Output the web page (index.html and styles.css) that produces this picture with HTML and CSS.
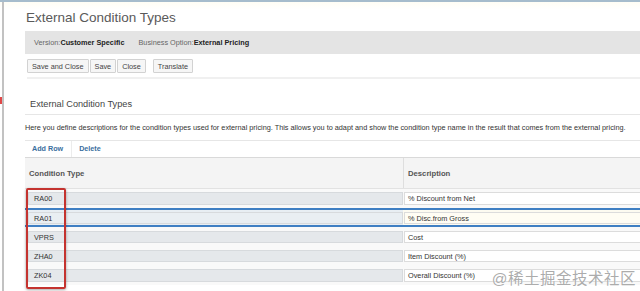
FILE: index.html
```html
<!DOCTYPE html>
<html lang="en">
<head>
  <meta charset="UTF-8">
  <meta name="viewport" content="width=device-width, initial-scale=1.0">
  <title>External Condition Types</title>
  <link rel="stylesheet" href="styles.css">
</head>
<body>
  <div class="shell">
    <div class="edge"><span class="edge-mark"></span></div>

    <main class="page">
      <h1 class="page-title">External Condition Types</h1>

      <div class="info-bar">
        <span class="info-item">Version:<b>Customer Specific</b></span>
        <span class="info-item">Business Option:<b>External Pricing</b></span>
      </div>

      <div class="toolbar">
        <button class="btn">Save and Close</button>
        <button class="btn">Save</button>
        <button class="btn">Close</button>
        <button class="btn btn-apart">Translate</button>
      </div>

      <section class="panel">
        <h2 class="panel-title">External Condition Types</h2>
        <p class="panel-hint">Here you define descriptions for the condition types used for external pricing. This allows you to adapt and show the condition type name in the result that comes from the external pricing.</p>

        <div class="actions">
          <a href="#" class="action">Add Row</a>
          <a href="#" class="action">Delete</a>
        </div>

        <div class="grid">
          <div class="grid-head">
            <div class="head-cell">Condition Type</div>
            <div class="head-cell head-desc">Description</div>
          </div>

          <div class="grid-row">
            <div class="cell cell-code">RA00</div>
            <div class="cell cell-desc">% Discount from Net</div>
          </div>
          <div class="grid-row selected">
            <div class="cell cell-code">RA01</div>
            <div class="cell cell-desc">% Disc.from Gross</div>
          </div>
          <div class="grid-row">
            <div class="cell cell-code">VPRS</div>
            <div class="cell cell-desc">Cost</div>
          </div>
          <div class="grid-row">
            <div class="cell cell-code">ZHA0</div>
            <div class="cell cell-desc">Item Discount (%)</div>
          </div>
          <div class="grid-row">
            <div class="cell cell-code">ZK04</div>
            <div class="cell cell-desc">Overall Discount (%)</div>
          </div>

          <!-- cadre rouge d'annotation -->
          <div class="highlight"></div>
        </div>
      </section>
    </main>
  </div>

  <div class="watermark">@稀土掘金技术社区</div>
</body>
</html>
```

FILE: styles.css
```css
:root {
  --text-color: #333;
  --light-text: #666;
  --line: #e6e6e6;
  --link: #3b6e9e;
  --select: #3f7fc3;
}

body {
  margin: 0;
  padding: 0;
  font-family: 'Liberation Sans', Arial, sans-serif;
  color: var(--text-color);
  background: linear-gradient(#fffdf2, #fff 10px);
  border-top: 2px solid #a6bccc;
  overflow: hidden;
}

.shell {
  display: flex;
  min-height: 289px;
}

.edge {
  position: relative;
  width: 2px;
  margin-left: 2px;
  background-color: #c2c2c2;
  flex-shrink: 0;
}

.edge-mark {
  position: absolute;
  left: -2px;
  top: 95px;
  width: 2px;
  height: 7px;
  background-color: #e04848;
}

.page {
  flex-grow: 1;
  padding-left: 21px;
}

.page-title {
  margin: 7px 0 4px 0;
  padding-left: 1px;
  font-size: 13.5px;
  line-height: 18px;
  font-weight: normal;
  color: #5a5a5a;
}

.info-bar {
  display: flex;
  align-items: center;
  gap: 14px;
  height: 23px;
  padding-left: 9px;
  background-color: #e4e4e4;
  font-size: 7.3px;
}

.info-item {
  color: var(--light-text);
}

.info-item b {
  color: #222;
}

.toolbar {
  display: flex;
  gap: 1px;
  margin: 5px 0 4px 2px;
  padding-bottom: 4px;
  border-bottom: 2px solid #f0f0f0;
}

.btn {
  margin: 0;
  height: 14px;
  padding: 0 4px;
  font-family: inherit;
  font-size: 7.3px;
  color: #444;
  background-color: #f6f6f6;
  border: 1px solid #d2d2d2;
  border-radius: 1px;
}

.btn-apart {
  margin-left: 6px;
}

.panel {
  margin-top: 19px;
}

.panel-title {
  margin: 0;
  padding: 0 0 4px 5px;
  font-size: 9.2px;
  line-height: 12px;
  font-weight: normal;
  color: #444;
  border-bottom: 1px solid var(--line);
}

.panel-hint {
  margin: 0;
  height: 25px;
  line-height: 25px;
  font-size: 7.3px;
  color: #333;
  white-space: nowrap;
  border-bottom: 1px solid var(--line);
}

.actions {
  display: flex;
  height: 16px;
  align-items: center;
  border-bottom: 1.5px solid #d9d9d9;
}

.action {
  padding: 0 8px 0 7px;
  line-height: 16px;
  font-size: 7.2px;
  font-weight: bold;
  color: var(--link);
  text-decoration: none;
}

.action:first-child {
  border-right: 1px solid #ececec;
}

.grid {
  position: relative;
}

.grid-head {
  display: grid;
  grid-template-columns: 378px 1fr;
  height: 30px;
  background-color: #f4f4f4;
  border-bottom: 1px solid #e2e2e2;
}

.head-cell {
  display: flex;
  align-items: center;
  padding-left: 4px;
  font-size: 7.7px;
  font-weight: bold;
  color: #555;
}

.head-desc {
  border-left: 1px solid #dedede;
  padding-left: 4px;
}

.grid-row {
  box-sizing: border-box;
  display: grid;
  grid-template-columns: 378px 1fr;
  align-items: center;
  height: 19.2px;
  background-color: #f9f9f9;
}

.grid-row.selected {
  border-top: 2px solid var(--select);
  border-bottom: 2px solid var(--select);
  background: linear-gradient(90deg, #e8eef3 378px, #fdfbf1 378px);
}

.cell {
  box-sizing: border-box;
  height: 12.5px;
  line-height: 11px;
  padding-left: 5px;
  font-size: 7.3px;
  color: #333;
  white-space: nowrap;
}

.cell-code {
  margin-left: 3px;
  background-color: #e5e8eb;
  border: 1px solid #d7dadd;
}

.grid-row.selected .cell-code {
  background-color: #e9eef2;
}

.cell-desc {
  margin-left: 1px;
  padding-left: 3px;
  background-color: #fff;
  border: 1px solid #dcdcdc;
  border-right: none;
}

.grid-row.selected .cell-desc {
  background-color: #fffdf4;
}

.highlight {
  position: absolute;
  left: 1px;
  top: 30px;
  width: 36px;
  height: 97px;
  border: 2px solid #c4332f;
  border-radius: 2px;
  box-shadow: 0 1px 3px rgba(0, 0, 0, 0.35);
}

.watermark {
  position: absolute;
  right: 4px;
  bottom: 3px;
  font-family: 'Liberation Sans', 'Noto Sans CJK SC', sans-serif;
  font-size: 15.5px;
  color: rgba(150, 150, 150, 0.8);
  text-shadow: 0 0 1px #fff;
  letter-spacing: 0.5px;
}
```
